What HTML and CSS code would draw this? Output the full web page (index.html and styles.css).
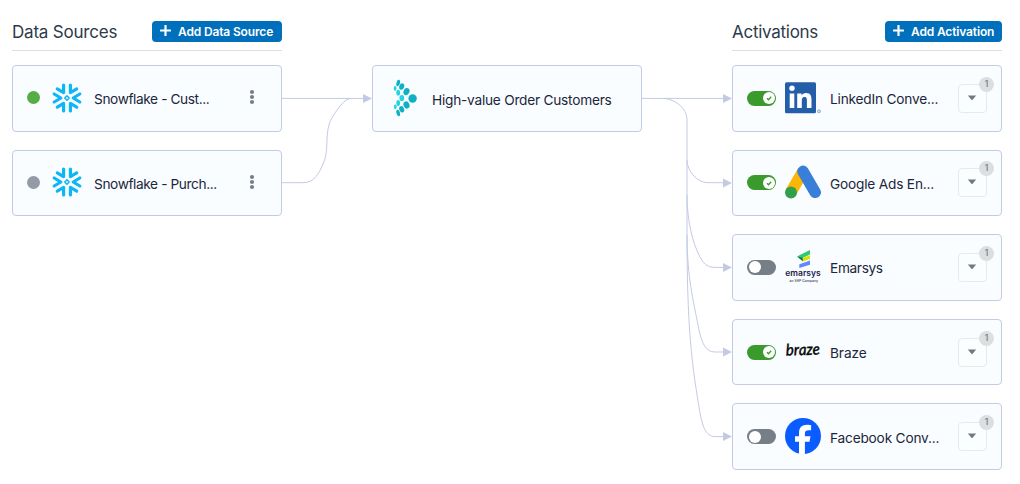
FILE: index.html
```html
<!DOCTYPE html>
<html lang="en">
<head>
<meta charset="utf-8">
<title>Audience Pipeline</title>
<link rel="stylesheet" href="styles.css">
</head>
<body>
<svg class="defs" width="0" height="0" aria-hidden="true">
  <symbol id="plus" viewBox="0 0 12 12"><path d="M6 .9v10.200M.9 6h10.200" stroke="#fff" stroke-width="2.4" stroke-linecap="round"/></symbol>
  <symbol id="snow" viewBox="0 0 30 30">
    <g fill="none" stroke="#0eb6f6" stroke-width="3.2" stroke-linecap="round" stroke-linejoin="round">
      <path d="M2.200 11L8.800 15l-6.600 4M27.800 11L21.200 15l6.600 4"/>
      <path d="M11.600 2v7.600L5.300 5.900M18.400 2v7.600l6.300-3.700M11.600 28v-7.600l-6.300 3.700M18.400 28v-7.600l6.300 3.700"/>
    </g>
    <path d="M15 12.800l2.200 2.200-2.200 2.200-2.200-2.200z" fill="none" stroke="#0eb6f6" stroke-width="1.500" stroke-linejoin="round"/>
  </symbol>
  <symbol id="dots" viewBox="0 0 6 16"><g fill="#767e89"><circle cx="3" cy="3" r="2.100"/><circle cx="3" cy="8" r="2.100"/><circle cx="3" cy="13" r="2.100"/></g></symbol>
  <symbol id="check" viewBox="0 0 12 12"><path d="M4 6.200l1.500 1.500 2.700-3" fill="none" stroke="#3a9b2c" stroke-width="1.300"/></symbol>
  <symbol id="caret" viewBox="0 0 10 6"><path d="M.8.500h8.400L5.600 4.800q-.6.600-1.200 0z" fill="#717983"/></symbol>
</svg>
<main class="board">
  <section class="column">
    <header class="head"><h2 class="title">Data Sources</h2><button class="add"><svg class="plus"><use href="#plus"/></svg><span class="addtext">Add Data Source</span></button></header>
    <div class="cards">
      <article class="card source"><i class="status on"></i><svg class="snow"><use href="#snow"/></svg><span class="name cust">Snowflake - Cust...</span><svg class="dots"><use href="#dots"/></svg></article>
      <article class="card source"><i class="status"></i><svg class="snow"><use href="#snow"/></svg><span class="name purch">Snowflake - Purch...</span><svg class="dots"><use href="#dots"/></svg></article>
    </div>
  </section>
  <section class="column middle">
    <article class="card audience">
      <svg class="brand" viewBox="0 0 24 38">
        <g fill="#0fb0c3"><circle cx="19.600" cy="19.500" r="4.200"/>
        <ellipse cx="5.200" cy="4" rx="1.800" ry="3.200" transform="rotate(12 5.200 4)"/><ellipse cx="8.700" cy="7.600" rx="2.400" ry="3.300" transform="rotate(20 8.700 7.600)"/><ellipse cx="13.500" cy="12.600" rx="2.900" ry="3.700" transform="rotate(25 13.500 12.600)"/>
        <ellipse cx="13.500" cy="26" rx="2.900" ry="3.700" transform="rotate(-25 13.500 26)"/><ellipse cx="8.700" cy="30.300" rx="2.400" ry="3.300" transform="rotate(-20 8.700 30.300)"/><ellipse cx="5.200" cy="34" rx="1.800" ry="3.200" transform="rotate(-12 5.200 34)"/></g>
        <g fill="#25d3df"><ellipse cx="2.100" cy="9.400" rx="1.400" ry="2.400"/><ellipse cx="5.200" cy="13.700" rx="1.900" ry="2.900"/><ellipse cx="8.800" cy="19" rx="2.400" ry="3.100"/><ellipse cx="5.200" cy="24" rx="1.900" ry="2.900"/><ellipse cx="2.300" cy="27.800" rx="1.400" ry="2.400"/></g>
      </svg>
      <span class="name high">High-value Order Customers</span>
    </article>
  </section>
  <section class="column">
    <header class="head"><h2 class="title act">Activations</h2><button class="add addact"><svg class="plus"><use href="#plus"/></svg><span class="addtext">Add Activation</span></button></header>
    <div class="cards">
      <article class="card target"><span class="toggle active"><i class="knob"><svg class="check"><use href="#check"/></svg></i></span>
        <svg class="logo" viewBox="0 0 36 36"><rect width="31" height="31" y="2.200" rx="1.500" fill="#245da8"/><circle cx="7" cy="8.300" r="2.700" fill="#fff"/><path fill="#fff" d="M4.700 13.400h4.600V28H4.700zM12.200 13.400h4.400v2c.7-1.200 2.200-2.300 4.500-2.300 4.700 0 5.400 3.100 5.400 7V28h-4.600v-7c0-1.700 0-3.900-2.400-3.900s-2.700 1.900-2.700 3.800V28h-4.600z"/><circle cx="34" cy="31.300" r="1.500" fill="#c6dcf0" stroke="#6c9aca" stroke-width=".7"/></svg>
        <span class="name linked">LinkedIn Conve...</span><button class="drop"><svg class="caret"><use href="#caret"/></svg><b class="badge">1</b></button></article>
      <article class="card target"><span class="toggle active"><i class="knob"><svg class="check"><use href="#check"/></svg></i></span>
        <svg class="logo" viewBox="0 0 36 36"><path d="M18 7.500L6 28" stroke="#fbb606" stroke-width="11.600"/><path d="M18 7.400L30.200 28.300" stroke="#397fd7" stroke-width="11.600" stroke-linecap="round"/><circle cx="6" cy="28.500" r="6" fill="#31a04c"/></svg>
        <span class="name google">Google Ads En...</span><button class="drop"><svg class="caret"><use href="#caret"/></svg><b class="badge">1</b></button></article>
      <article class="card target"><span class="toggle"><i class="knob"></i></span>
        <svg class="logo" viewBox="0 0 36 36"><path d="M12 7.400L25 1v4.400L17.500 9z" fill="#2fcb73"/><path d="M12 7.400l6 1.400v3.700z" fill="#087344"/><path d="M17.600 9L25 6.200v3.700l-7.200 2.600z" fill="#d8e308"/><path d="M14.300 15.200L25 11.500v4.200l-10.700 3.200z" fill="#6388fa"/><text class="emtext" x=".3" y="27" textLength="35.400" lengthAdjust="spacingAndGlyphs">emarsys</text><text class="emsub" x="4.500" y="33" textLength="28.500" lengthAdjust="spacingAndGlyphs">an SAP Company</text></svg>
        <span class="name ems">Emarsys</span><button class="drop"><svg class="caret"><use href="#caret"/></svg><b class="badge">1</b></button></article>
      <article class="card target"><span class="toggle active"><i class="knob"><svg class="check"><use href="#check"/></svg></i></span>
        <svg class="logo" viewBox="0 0 36 36"><text class="braze" x="1" y="21" textLength="34" lengthAdjust="spacingAndGlyphs" transform="rotate(-2 18 18)">braze</text></svg>
        <span class="name brz">Braze</span><button class="drop"><svg class="caret"><use href="#caret"/></svg><b class="badge">1</b></button></article>
      <article class="card target"><span class="toggle"><i class="knob"></i></span>
        <svg class="logo" viewBox="0 0 36 36"><circle cx="18" cy="18" r="18" fill="#0b5cff"/><path fill="#fff" d="M14 36V23.700h-4v-5.500h4v-2.700C14 9.500 16.700 6.800 22.300 6.800c1.200 0 3 .2 3.800.4v5h-2.400c-2.800 0-3.800 1-3.800 3.700v2.300h5.600l-1 5.500h-4.600V36z"/></svg>
        <span class="name face">Facebook Conv...</span><button class="drop"><svg class="caret"><use href="#caret"/></svg><b class="badge">1</b></button></article>
    </div>
  </section>
  <svg class="edges" viewBox="0 0 1020 484">
    <g fill="none" stroke="#c3cbe4">
      <path d="M282 98.400H364M282 182.700H303C315 182.700 319 173 323.500 163C329 150 325 137 329.500 123C333 115 337 110 341 105Q346 98.400 352 98.400"/>
      <path d="M642 98.400H724M663 98.400C673 98.400 687 107 687 120V160C687 171 697 182.700 708 182.700H724"/>
      <path d="M687 160V195C687 219 692 242 700 257Q705 267.400 714 267.400H724"/>
      <path d="M687 195V235C687 280 695 308 699 330C702 344 706 352 715 352H724"/>
      <path d="M687 235C687 335 693 370 699 407C702 427 706 436.600 715 436.600H724"/>
    </g>
    <path fill="#c3cbe4" d="M363 94v9l9-4.500zM723 94v9l9-4.500zM723 178.500v9l9-4.500zM723 263v9l9-4.500zM723 347.500v9l9-4.500zM723 432v9l9-4.500z"/>
  </svg>
</main>
</body>
</html>
```
FILE: styles.css
```css
* { box-sizing: border-box; }
body { margin: 0; background: #fff; font-family: Inter, "Liberation Sans", sans-serif; color: #1b263b; }
.defs { position: absolute; }
.board { position: relative; width: 1020px; height: 484px; padding: 21px 18px 0 12px; display: grid; grid-template-columns: repeat(3, 270px); column-gap: 90px; align-items: start; }
.edges { position: absolute; inset: 0; width: 1020px; height: 484px; pointer-events: none; }
.column { display: flex; flex-direction: column; gap: 14px; }
.middle { padding-top: 44px; }
.head { height: 30px; display: flex; justify-content: space-between; align-items: flex-start; border-bottom: 1px solid #dcdee1; }
.title { margin: 0; font-size: 17px; line-height: 23px; font-weight: 400; letter-spacing: -.2px; color: #2e394b; white-space: nowrap; }
.act { letter-spacing: -.27px; }
.add { width: 130px; height: 21px; padding: 0 0 0 8px; border: 0; border-radius: 4px; background: #0070bc; color: #fff; display: flex; align-items: center; gap: 7px; font: 600 12px/21px Inter, sans-serif; letter-spacing: -.15px; white-space: nowrap; }
.addact { width: 117px; }
.plus { width: 11px; height: 11px; margin-top: -2px; flex: none; }
.cards { display: flex; flex-direction: column; gap: 18px; }
.card { width: 270px; height: 66.600px; border: 1px solid #c3cbe4; border-radius: 4px; background: #fafdff; display: flex; align-items: center; }
.middle .card { height: 67px; }
.name { font-size: 13.700px; line-height: 20px; padding-top: 2px; white-space: nowrap; letter-spacing: -.2px; }
.cust, .purch { letter-spacing: -.4px; }
.high { letter-spacing: -.24px; }
.ems { letter-spacing: -.35px; }
.brz { letter-spacing: -.1px; }
.source { padding: 0 26px 0 14px; }
.status { width: 13px; height: 13px; margin-top: -1px; border-radius: 50%; background: #959ba6; flex: none; }
.status.on { background: #57ad45; }
.snow { width: 30px; height: 30px; margin: -1px 12px 0; flex: none; }
.dots { width: 6px; height: 16px; margin-top: -2px; margin-left: auto; flex: none; }
.audience { padding-left: 20px; }
.brand { width: 24px; height: 38px; margin: -1px 15px 0 0; flex: none; }
.target { padding: 0 14px; }
.toggle { width: 29px; height: 15px; padding: 1.500px; border-radius: 8px; background: #767e87; display: flex; flex: none; }
.toggle.active { background: #3a9b2c; justify-content: flex-end; }
.knob { width: 12px; height: 12px; border-radius: 50%; background: #fff; display: flex; }
.check { width: 12px; height: 12px; }
.logo { width: 36px; height: 36px; margin: -1px 9px 0; flex: none; overflow: visible; }
.drop { position: relative; width: 29px; height: 29px; margin-left: auto; padding: 0 1px 1px 0; border: 1px solid #e7e9ec; border-radius: 4px; background: #fbfeff; display: flex; align-items: center; justify-content: center; flex: none; }
.caret { width: 10px; height: 6px; }
.badge { position: absolute; top: -8px; right: -8px; width: 15px; height: 15px; border-radius: 50%; background: #dcdee0; color: #717780; font: 500 8.500px/15px Inter, sans-serif; text-align: center; }
.emtext { font: 600 8px Inter, sans-serif; fill: #1a1c48; }
.emsub { font: 500 3.500px Inter, sans-serif; fill: #33355a; }
.braze { font: italic 500 16px Lato, sans-serif; fill: #050505; stroke: #050505; stroke-width: .35px; }
```
